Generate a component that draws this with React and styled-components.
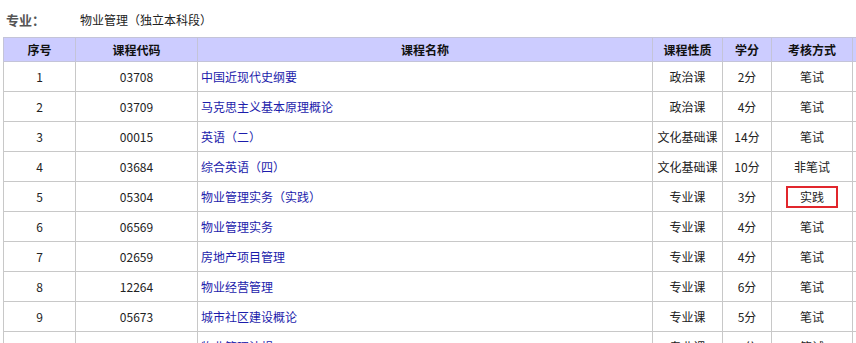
import styled, { createGlobalStyle } from 'styled-components'

const Global = createGlobalStyle`
  html, body {
    margin: 0;
    padding: 0;
    overflow: hidden;
    background: #fff;
  }
  body {
    font-family: "Noto Sans CJK SC", "Liberation Sans", sans-serif;
    font-size: 12px;
    color: #222;
  }
`;

const Page = styled.div`
  width: 880px;
  padding: 8px 0 0 3px;
`;

const MajorLine = styled.div`
  display: flex;
  align-items: center;
  height: 22px;
  padding-left: 3px;
  margin-bottom: 7px;
`;

const MajorLabel = styled.span`
  width: 74px;
  font-size: 13px;
  font-weight: 700;
  color: #555;
`;

const MajorValue = styled.span`
  font-size: 12px;
  color: #222;
`;

const Table = styled.table`
  border-collapse: collapse;
  table-layout: fixed;
  width: 877px;
`;

const Th = styled.th`
  height: 23px;
  padding: 0;
  background: #ccccff;
  border: 1px solid #c4c4d8;
  font-weight: 700;
  font-size: 12px;
  color: #111;
  text-align: center;
`;

const Td = styled.td`
  height: 29px;
  padding: 0 ${p => (p.$left ? '3px' : '0')};
  border: 1px solid #c8c8c8;
  text-align: ${p => (p.$left ? 'left' : 'center')};
  color: ${p => (p.$link ? '#1c1cab' : '#222')};
  white-space: nowrap;
  overflow: hidden;
`;

const Marked = styled.span`
  display: inline-block;
  width: 48px;
  line-height: 18px;
  border: 2px solid #e1262c;
  text-align: center;
`;

const courses = [
  ['1', '03708', '中国近现代史纲要', '政治课', '2分', '笔试'],
  ['2', '03709', '马克思主义基本原理概论', '政治课', '4分', '笔试'],
  ['3', '00015', '英语（二）', '文化基础课', '14分', '笔试'],
  ['4', '03684', '综合英语（四）', '文化基础课', '10分', '非笔试'],
  ['5', '05304', '物业管理实务（实践）', '专业课', '3分', '实践', true],
  ['6', '06569', '物业管理实务', '专业课', '4分', '笔试'],
  ['7', '02659', '房地产项目管理', '专业课', '4分', '笔试'],
  ['8', '12264', '物业经营管理', '专业课', '6分', '笔试'],
  ['9', '05673', '城市社区建设概论', '专业课', '5分', '笔试'],
  ['10', '10365', '物业管理法规', '专业课', '6分', '笔试'],
];

export default function App() {
  return (
    <Page>
      <Global />
      <MajorLine>
        <MajorLabel>专业：</MajorLabel>
        <MajorValue>物业管理（独立本科段）</MajorValue>
      </MajorLine>
      <Table>
        <colgroup>
          <col style={{ width: 72 }} />
          <col style={{ width: 122 }} />
          <col style={{ width: 455 }} />
          <col style={{ width: 70 }} />
          <col style={{ width: 49 }} />
          <col style={{ width: 81 }} />
          <col style={{ width: 28 }} />
        </colgroup>
        <thead>
          <tr>
            <Th>序号</Th>
            <Th>课程代码</Th>
            <Th>课程名称</Th>
            <Th>课程性质</Th>
            <Th>学分</Th>
            <Th>考核方式</Th>
            <Th></Th>
          </tr>
        </thead>
        <tbody>
          {courses.map(c => (
            <tr key={c[0]}>
              <Td>{c[0]}</Td>
              <Td>{c[1]}</Td>
              <Td $left $link>{c[2]}</Td>
              <Td>{c[3]}</Td>
              <Td>{c[4]}</Td>
              <Td>{c[6] ? <Marked>{c[5]}</Marked> : c[5]}</Td>
              <Td></Td>
            </tr>
          ))}
        </tbody>
      </Table>
    </Page>
  );
}
